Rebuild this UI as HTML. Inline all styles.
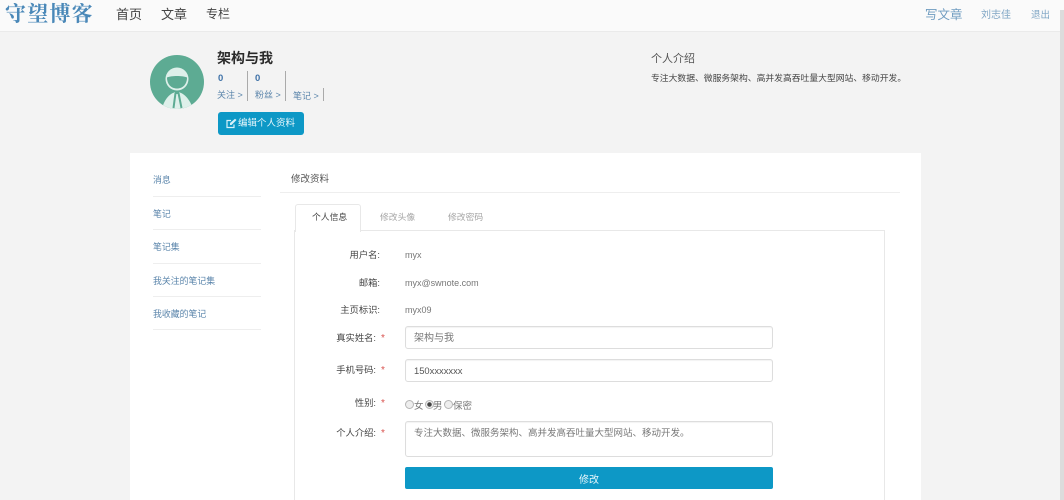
<!DOCTYPE html>
<html lang="zh"><head><meta charset="utf-8"><title>修改资料</title>
<style>
html,body{margin:0;padding:0;width:1064px;height:500px;overflow:hidden;background:#f3f3f3}
body{font-family:"Liberation Sans","Noto Sans CJK SC",sans-serif;position:relative;filter:blur(.3px)}
.a{position:absolute;white-space:nowrap;line-height:1}
.b{position:absolute;box-sizing:border-box}
.blue{color:#5b85ab}.lab{color:#444;font-size:9.3px;text-align:right;width:80px}
.val{color:#777;font-size:9px}.star{color:#d9534f;font-size:10px}
.inp{position:absolute;left:405px;width:368px;box-sizing:border-box;background:#fff;border:1px solid #ddd;border-radius:3px;box-shadow:inset 0 1px 1px rgba(0,0,0,.05)}
.line{position:absolute;height:1px;background:#eee}
.r{position:absolute;width:7px;height:7px;border:1px solid #b5b5b5;border-radius:50%;background:#eee;box-sizing:content-box}
</style></head><body>
<div class="b" style="left:0;top:0;width:1064px;height:32px;background:#fafafa;border-bottom:1px solid #eaeaea"></div>
<div class="a" style="left:5px;top:0;font:bold 21px/26px 'Noto Serif CJK SC',serif;color:#4a88b8;letter-spacing:1.2px">守望博客</div>
<div class="a" style="left:116px;top:8px;font-size:13px;color:#444">首页</div>
<div class="a" style="left:161px;top:8px;font-size:13px;color:#444">文章</div>
<div class="a" style="left:206px;top:8px;font-size:12px;color:#444">专栏</div>
<div class="a" style="left:925px;top:9px;font-size:12.5px;color:#6f9cc0">写文章</div>
<div class="a" style="left:981px;top:11px;font-size:10px;color:#7fa5c4">刘志佳</div>
<div class="a" style="left:1031px;top:11px;font-size:9.5px;color:#7fa5c4">退出</div>
<div class="b" style="left:1060px;top:10px;width:4px;height:490px;background:#dcdcdc"></div>

<svg class="b" style="left:150px;top:55px" width="54" height="54" viewBox="0 0 54 54">
<defs><clipPath id="c"><circle cx="27" cy="27" r="27"/></clipPath></defs>
<circle cx="27" cy="27" r="27" fill="#5dab93"/>
<g clip-path="url(#c)"><path d="M12 54C14 44 21 37 27 37S40 44 43 54Z" fill="#def0ea"/></g>
<circle cx="27" cy="24" r="11.5" fill="#def0ea"/>
<path d="M17 22.5C21 20.5 33 20.5 37 22.5C37 29 33 33.5 27 33.5S17 29 17 22.5Z" fill="#5dab93"/>
<path d="M25.5 38L23.5 53M28.5 38L31.5 53M25 38H29" stroke="#5dab93" stroke-width="2" fill="none"/>
</svg>

<div class="a" style="left:217px;top:51px;font-size:14px;font-weight:bold;color:#2b2b2b">架构与我</div>
<div class="a" style="left:218px;top:74px;font-size:9.5px;font-weight:bold;color:#3f72a8">0</div>
<div class="a" style="left:255px;top:74px;font-size:9.5px;font-weight:bold;color:#3f72a8">0</div>
<div class="a blue" style="left:217px;top:91px;font-size:9px">关注 &gt;</div>
<div class="a blue" style="left:255px;top:91px;font-size:9px">粉丝 &gt;</div>
<div class="a blue" style="left:293px;top:92px;font-size:9px">笔记 &gt;</div>
<div class="b" style="left:247px;top:71px;width:1px;height:30px;background:#aaa"></div>
<div class="b" style="left:285px;top:71px;width:1px;height:30px;background:#aaa"></div>
<div class="b" style="left:323px;top:88px;width:1px;height:13px;background:#aaa"></div>
<div class="b" style="left:218px;top:112px;width:86px;height:23px;background:#0d98c6;border-radius:3px"></div>
<svg class="b" style="left:226px;top:118px" width="11" height="11" viewBox="0 0 11 11"><path d="M8 6.5V9.5H1V2.5H5" fill="none" stroke="#d8f0f8" stroke-width="1.2"/><path d="M4 5L9 .8L10.5 2L5.5 7H4Z" fill="#d8f0f8"/></svg>
<div class="a" style="left:238px;top:119px;font-size:9.5px;color:#e6f6fb">编辑个人资料</div>

<div class="a" style="left:651px;top:54px;font-size:11px;color:#555">个人介绍</div>
<div class="a" style="left:651px;top:74px;font-size:8.8px;color:#444">专注大数据、微服务架构、高并发高吞吐量大型网站、移动开发。</div>

<div class="b" style="left:130px;top:153px;width:791px;height:347px;background:#fff"></div>
<div class="a blue" style="left:153px;top:176px;font-size:8.9px">消息</div>
<div class="a blue" style="left:153px;top:210px;font-size:8.9px">笔记</div>
<div class="a blue" style="left:153px;top:243px;font-size:8.9px">笔记集</div>
<div class="a blue" style="left:153px;top:277px;font-size:8.9px">我关注的笔记集</div>
<div class="a blue" style="left:153px;top:310px;font-size:8.9px">我收藏的笔记</div>
<div class="line" style="left:153px;top:196px;width:108px"></div>
<div class="line" style="left:153px;top:229px;width:108px"></div>
<div class="line" style="left:153px;top:263px;width:108px"></div>
<div class="line" style="left:153px;top:296px;width:108px"></div>
<div class="line" style="left:153px;top:329px;width:108px"></div>

<div class="a" style="left:291px;top:175px;font-size:9.5px;color:#555">修改资料</div>
<div class="line" style="left:280px;top:192px;width:620px"></div>

<div class="b" style="left:294px;top:230px;width:591px;height:270px;border:1px solid #e8e8e8;border-bottom:0"></div>
<div class="b" style="left:295px;top:204px;width:66px;height:28px;background:#fff;border:1px solid #e8e8e8;border-bottom:0;border-radius:3px 3px 0 0"></div>
<div class="a" style="left:312px;top:213px;font-size:8.8px;color:#444">个人信息</div>
<div class="a" style="left:380px;top:213px;font-size:8.8px;color:#a5a5a5">修改头像</div>
<div class="a" style="left:448px;top:213px;font-size:8.8px;color:#a5a5a5">修改密码</div>

<div class="a lab" style="left:300px;top:251px">用户名:</div><div class="a val" style="left:405px;top:251px">myx</div>
<div class="a lab" style="left:300px;top:279px">邮箱:</div><div class="a val" style="left:405px;top:279px">myx@swnote.com</div>
<div class="a lab" style="left:300px;top:306px">主页标识:</div><div class="a val" style="left:405px;top:306px">myx09</div>

<div class="a lab" style="left:296px;top:334px">真实姓名:</div><div class="a star" style="left:381px;top:334px">*</div>
<div class="inp" style="top:326px;height:23px"></div><div class="a val" style="left:414px;top:334px;font-size:10px">架构与我</div>
<div class="a lab" style="left:296px;top:366px">手机号码:</div><div class="a star" style="left:381px;top:366px">*</div>
<div class="inp" style="top:359px;height:23px"></div><div class="a" style="left:414px;top:366px;font-size:9.4px;color:#555">150xxxxxxx</div>
<div class="a lab" style="left:296px;top:399px">性别:</div><div class="a star" style="left:381px;top:399px">*</div>
<div class="r" style="left:405px;top:400px"></div><div class="a val" style="left:414px;top:402px;font-size:9.5px">女</div>
<div class="r" style="left:425px;top:400px;background:radial-gradient(circle,#444 0 2px,#eee 2.5px)"></div><div class="a val" style="left:433px;top:402px;font-size:9.5px">男</div>
<div class="r" style="left:444px;top:400px"></div><div class="a val" style="left:453px;top:402px;font-size:9.5px">保密</div>
<div class="a lab" style="left:296px;top:429px">个人介绍:</div><div class="a star" style="left:381px;top:429px">*</div>
<div class="inp" style="top:421px;height:36px"></div><div class="a val" style="left:414px;top:429px;font-size:9.5px">专注大数据、微服务架构、高并发高吞吐量大型网站、移动开发。</div>
<div class="b" style="left:405px;top:467px;width:368px;height:22px;background:#0d98c6;border-radius:2px"></div>
<div class="a" style="left:405px;top:476px;width:368px;text-align:center;font-size:10px;color:#e6f6fb">修改</div>
</body></html>
